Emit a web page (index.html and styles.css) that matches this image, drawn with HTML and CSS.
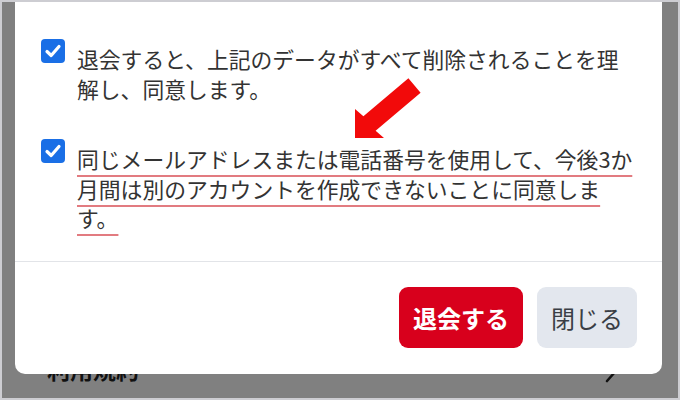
FILE: index.html
```html
<!DOCTYPE html>
<html lang="ja">
<head>
<meta charset="utf-8">
<title>退会</title>
<link rel="stylesheet" href="styles.css">
</head>
<body>
<div class="screen">
  <div class="page">
    <div class="page-row">
      <span class="page-label">利用規約</span>
      <svg class="chev" width="14" height="24" viewBox="0 0 14 24"><path d="M3 3 L11 12 L3 21" fill="none" stroke="#111" stroke-width="2.6" stroke-linecap="round" stroke-linejoin="round"/></svg>
    </div>
  </div>

  <div class="modal">
    <div class="modal-body">
      <label class="agree">
        <span class="check"><svg width="24" height="24" viewBox="0 0 24 24"><path d="M6 12.5 L10.2 16.5 L18 7.5" fill="none" stroke="#fff" stroke-width="3.2" stroke-linecap="round" stroke-linejoin="round"/></svg></span>
        <span class="agree-text">退会すると、上記のデータがすべて削除されることを理解し、同意します。</span>
      </label>
      <label class="agree">
        <span class="check"><svg width="24" height="24" viewBox="0 0 24 24"><path d="M6 12.5 L10.2 16.5 L18 7.5" fill="none" stroke="#fff" stroke-width="3.2" stroke-linecap="round" stroke-linejoin="round"/></svg></span>
        <span class="agree-text"><span class="marked">同じメールアドレスまたは電話番号を使用して、今後3か月間は別のアカウントを作成できないことに同意します。</span></span>
      </label>
    </div>
    <div class="modal-footer">
      <button class="btn btn-danger">退会する</button>
      <button class="btn btn-close">閉じる</button>
    </div>
  </div>

  <svg class="arrow" width="676" height="396" viewBox="2 2 676 396">
    <polygon points="355,138 384,138 375.6,130.8 420.6,92.8 408.4,78.2 363.4,116.2 355,109" fill="#f20a0a"/>
  </svg>
</div>
</body>
</html>
```

FILE: styles.css
```css
html, body {
  margin: 0;
  padding: 0;
  background: #cdcdd2;
}

body {
  font-family: "Noto Sans CJK JP", "Noto Sans", sans-serif;
}

.screen {
  position: relative;
  width: 676px;
  height: 396px;
  margin: 2px;
  background: #808080;
  overflow: hidden;
}

.page {
  padding-top: 352px;
}

.page-row {
  display: flex;
  align-items: center;
  justify-content: space-between;
  height: 30px;
  padding: 0 60px 0 45px;
}

.page-label {
  font-size: 23px;
  line-height: 30px;
  font-weight: 700;
  color: #111;
}

.chev {
  margin-top: 6px;
}

.modal {
  position: absolute;
  left: 13px;
  top: 0;
  width: 647px;
  height: 372px;
  background: #fff;
  border-radius: 0 0 10px 10px;
  display: flex;
  flex-direction: column;
}

.modal-body {
  padding: 42px 23px 28px 26px;
  display: flex;
  flex-direction: column;
  gap: 41px;
  border-bottom: 1px solid #e2e4e8;
}

.agree {
  display: flex;
  align-items: flex-start;
  gap: 12px;
}

.check {
  flex: none;
  width: 24px;
  height: 24px;
  margin-top: -5px;
  border-radius: 4px;
  background: #1a6fe6;
  display: flex;
}

.agree-text {
  font-size: 21.8px;
  line-height: 29.5px;
  color: #333;
}

.marked {
  text-decoration: underline;
  text-decoration-color: #e27b80;
  text-decoration-thickness: 2px;
  text-underline-offset: 7px;
}

.modal-footer {
  display: flex;
  justify-content: flex-end;
  gap: 14px;
  padding: 25px 25px 0 0;
}

.btn {
  height: 61px;
  padding: 0 14px;
  border: none;
  border-radius: 9px;
  font-family: "Noto Sans CJK JP", "Noto Sans", sans-serif;
  font-size: 24px;
  line-height: 61px;
}

.btn-danger {
  background: #d8001c;
  color: #fff;
  font-weight: 700;
}

.btn-close {
  background: #e3e7ee;
  color: #3a3e45;
  font-weight: 400;
}

.arrow {
  position: absolute;
  left: 0;
  top: 0;
  pointer-events: none;
}
```
